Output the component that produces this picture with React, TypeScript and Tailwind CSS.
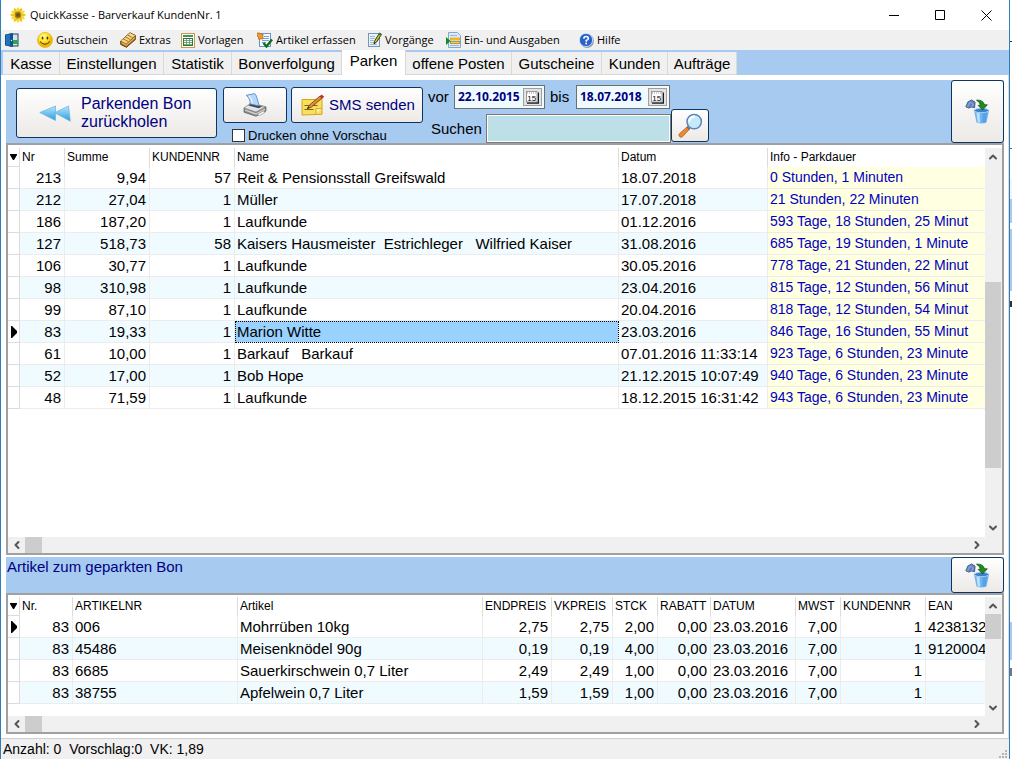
import React from 'react';
import { ChevronDown, ChevronLeft, ChevronRight, ChevronUp } from 'lucide-react';

interface Column {
  label: string;
  width: string;
  right?: boolean;
  info?: boolean;
}

const bonColumns: Column[] = [
  { label: 'Nr', width: 'w-[45px]', right: true },
  { label: 'Summe', width: 'w-[85px]', right: true },
  { label: 'KUNDENNR', width: 'w-[85px]', right: true },
  { label: 'Name', width: 'w-[384px]' },
  { label: 'Datum', width: 'w-[149px]' },
  { label: 'Info - Parkdauer', width: 'w-auto', info: true },
];

const bons = [
  ['213', '9,94', '57', 'Reit & Pensionsstall Greifswald', '18.07.2018', '0 Stunden, 1 Minuten'],
  ['212', '27,04', '1', 'Müller', '17.07.2018', '21 Stunden, 22 Minuten'],
  ['186', '187,20', '1', 'Laufkunde', '01.12.2016', '593 Tage, 18 Stunden, 25 Minut'],
  ['127', '518,73', '58', 'Kaisers Hausmeister  Estrichleger   Wilfried Kaiser', '31.08.2016', '685 Tage, 19 Stunden, 1 Minute'],
  ['106', '30,77', '1', 'Laufkunde', '30.05.2016', '778 Tage, 21 Stunden, 22 Minut'],
  ['98', '310,98', '1', 'Laufkunde', '23.04.2016', '815 Tage, 12 Stunden, 56 Minut'],
  ['99', '87,10', '1', 'Laufkunde', '20.04.2016', '818 Tage, 12 Stunden, 54 Minut'],
  ['83', '19,33', '1', 'Marion Witte', '23.03.2016', '846 Tage, 16 Stunden, 55 Minut'],
  ['61', '10,00', '1', 'Barkauf   Barkauf', '07.01.2016 11:33:14', '923 Tage, 6 Stunden, 23 Minute'],
  ['52', '17,00', '1', 'Bob Hope', '21.12.2015 10:07:49', '940 Tage, 6 Stunden, 23 Minute'],
  ['48', '71,59', '1', 'Laufkunde', '18.12.2015 16:31:42', '943 Tage, 6 Stunden, 23 Minute'],
];

const artikelColumns: Column[] = [
  { label: 'Nr.', width: 'w-[53px]', right: true },
  { label: 'ARTIKELNR', width: 'w-[165px]' },
  { label: 'Artikel', width: 'w-[245px]' },
  { label: 'ENDPREIS', width: 'w-[69px]', right: true },
  { label: 'VKPREIS', width: 'w-[61px]', right: true },
  { label: 'STCK', width: 'w-[45px]', right: true },
  { label: 'RABATT', width: 'w-[53px]', right: true },
  { label: 'DATUM', width: 'w-[85px]' },
  { label: 'MWST', width: 'w-[45px]', right: true },
  { label: 'KUNDENNR', width: 'w-[85px]', right: true },
  { label: 'EAN', width: 'w-auto' },
];

const artikel = [
  ['83', '006', 'Mohrrüben 10kg', '2,75', '2,75', '2,00', '0,00', '23.03.2016', '7,00', '1', '42381323'],
  ['83', '45486', 'Meisenknödel 90g', '0,19', '0,19', '4,00', '0,00', '23.03.2016', '7,00', '1', '91200046'],
  ['83', '6685', 'Sauerkirschwein 0,7 Liter', '2,49', '2,49', '1,00', '0,00', '23.03.2016', '7,00', '1', ''],
  ['83', '38755', 'Apfelwein 0,7 Liter', '1,59', '1,59', '1,00', '0,00', '23.03.2016', '7,00', '1', ''],
];

const SunflowerIcon = () => (
  <svg width="16" height="16" viewBox="0 0 16 16">
    {[0, 30, 60, 90, 120, 150].map((a) => (
      <ellipse key={a} cx="8" cy="8" rx="7.8" ry="2.1" fill={a % 60 ? '#f7dc3a' : '#ecc81c'} transform={`rotate(${a} 8 8)`} />
    ))}
    <circle cx="8" cy="8" r="3.4" fill="#a8821a" />
    <circle cx="8" cy="8" r="2" fill="#6b561c" />
  </svg>
);

const DoorIcon = () => (
  <svg width="14" height="14" viewBox="0 0 14 14">
    <rect x="5" y="1" width="8" height="12" fill="#cfe4f5" stroke="#2f3f58" />
    <rect x="7" y="7" width="6" height="4" fill="#2fa84c" />
    <path d="M0 1.5 8 0v14l-8-1.5z" fill="#12528f" />
    <path d="M1 2.3 5 1.6v10.8l-4-.7z" fill="#1f74bd" />
    <circle cx="6.5" cy="7.5" r=".7" fill="#fff" />
  </svg>
);

const SmileyIcon = () => (
  <svg width="16" height="16" viewBox="0 0 16 16">
    <defs>
      <radialGradient id="smiley" cx="40%" cy="30%">
        <stop offset="0" stopColor="#fffbb0" />
        <stop offset=".6" stopColor="#ffe620" />
        <stop offset="1" stopColor="#efb808" />
      </radialGradient>
    </defs>
    <circle cx="8" cy="8" r="7.5" fill="url(#smiley)" stroke="#e0ac10" strokeWidth=".7" />
    <ellipse cx="5.6" cy="6" rx=".9" ry="1.6" fill="#4a3500" />
    <ellipse cx="10.4" cy="6" rx=".9" ry="1.6" fill="#4a3500" />
    <path d="M3 9.5q5 5.5 10 0" fill="none" stroke="#4a3500" strokeWidth="1" />
  </svg>
);

const CardsIcon = () => (
  <svg width="16" height="16" viewBox="0 0 16 16">
    <path d="M.7 9 10 .8l5.3 2.6v4.2L6.4 15.3.7 12.4z" fill="#a76b20" stroke="#6b3e0b" />
    <path d="M1 8.7 10 1l5 2.6-8.7 8z" fill="#f7d98a" />
    <path d="m3.2 6.8 5.1 2.8M5.4 4.9l5.1 2.8M7.6 3l5.1 2.8" stroke="#8a541a" strokeWidth=".8" />
    <path d="m1.5 10.7 4.8 2.5L15 5.6" fill="none" stroke="#f4cf7a" />
  </svg>
);

const TemplateIcon = () => (
  <svg width="14" height="15" viewBox="0 0 14 15">
    <rect x=".5" y=".5" width="13" height="14" fill="#fdfcee" stroke="#c39a56" />
    <path d="M2 3h10" stroke="#1f7436" strokeWidth="1.6" />
    <rect x="2.5" y="5.5" width="9" height="7" fill="#fff" stroke="#2a7a3d" />
    <path d="M3 7.5h8M3 9.5h8M3 11.5h8M5.5 6v6M8.5 6v6" stroke="#559365" strokeWidth=".8" />
  </svg>
);

const CaptureIcon = () => (
  <svg width="16" height="16" viewBox="0 0 16 16">
    <rect x="2.5" y="1.5" width="11" height="13" fill="#f7fbff" stroke="#6a94bd" />
    <path d="M7 4.5h5M5 6.5h7M5 8.5h7M5 10.5h4" stroke="#75a5d5" />
    <path d="M0 1h3l2 2 1-1v5H1l1-1-2-2z" fill="#ef962e" stroke="#a85a11" strokeWidth=".6" />
    <path d="m6.5 11 3 3.5 5.5-7" fill="none" stroke="#0d6b22" strokeWidth="2.4" />
  </svg>
);

const NotePencilIcon = () => (
  <svg width="14" height="16" viewBox="0 0 14 16">
    <rect x=".5" y="1.5" width="11" height="13" fill="#eaf3fc" stroke="#7796b5" />
    <path d="M2 4.5h5M2 6.5h5M2 8.5h4M2 10.5h4M2 12.5h7" stroke="#9ab8d4" />
    <path d="m6 12 .8-3.2L11.5 1l2 1.3-4.8 7.6z" fill="#d2cb26" stroke="#1d2412" strokeWidth=".9" />
    <path d="m11 1.8 2 1.4" stroke="#2d8b3c" strokeWidth="2" />
  </svg>
);

const InOutIcon = () => (
  <svg width="15" height="16" viewBox="0 0 15 16">
    <path d="M2.5.5h9l3 3v12h-12z" fill="#dbeafa" stroke="#87a7c8" />
    <path d="M4 3.5h7M4 13.5h9" stroke="#9ab9d8" />
    <rect x="4.5" y="6" width="9.5" height="2" fill="#ffc928" stroke="#c48b14" strokeWidth=".5" />
    <rect x="4.5" y="9.5" width="9.5" height="2" fill="#ffc928" stroke="#6f6524" strokeWidth=".5" />
    <path d="M0 5v8l4.5-4z" fill="#16892c" />
  </svg>
);

const HelpIcon = () => (
  <svg width="15" height="15" viewBox="0 0 15 15">
    <circle cx="8" cy="8" r="7" fill="#8fa0b8" />
    <circle cx="7" cy="7" r="6.6" fill="#2a62cc" stroke="#dbe6f8" strokeWidth=".8" />
    <path d="M4.8 5.6Q5 3.5 7.1 3.5T9.4 5.5Q9.4 6.7 7.2 7.5v1.3" fill="none" stroke="#fff" strokeWidth="1.6" />
    <circle cx="7.2" cy="10.6" r="1" fill="#fff" />
  </svg>
);

const RewindIcon = () => (
  <svg width="32" height="17" viewBox="0 0 32 17">
    <defs>
      <linearGradient id="rewind" x1="0" y1="0" x2="0" y2="1">
        <stop offset="0" stopColor="#b9e6fb" />
        <stop offset="1" stopColor="#2d9be0" />
      </linearGradient>
    </defs>
    <path d="M16.5 1v14.5L.8 7.5z" fill="url(#rewind)" stroke="#6cb9e4" strokeWidth=".8" />
    <path d="M29.5 1l1.8 15.2L15.5 7.8z" fill="url(#rewind)" stroke="#6cb9e4" strokeWidth=".8" />
  </svg>
);

const PrinterIcon = () => (
  <svg width="24" height="24" viewBox="0 0 24 24">
    <path d="m1 15 10-4 12 3v4l-10 5.2L1 19.2z" fill="#8c8d91" stroke="#55565a" strokeWidth=".7" />
    <path d="m1 15 6-4.5 15.8 3.2L13 19z" fill="#e2e3e6" stroke="#77787c" strokeWidth=".6" />
    <path d="m5.2 12.4 10.6 2.9 3.4-1.8L8 10.6z" fill="#44454a" />
    <path d="M3.2 2.3 11.6.6q1.6 1 2.3 4.2l2.3 8.2-9-2Q7.3 5.2 3.2 2.3z" fill="#b4d7fb" stroke="#4e80bd" strokeWidth=".8" />
    <path d="M5.8 2.7q3.2 3 3.4 7.6" fill="none" stroke="#e4f2ff" strokeWidth="1.2" />
    <path d="m2 17 11 4 9-4.6" fill="none" stroke="#d4d5d8" strokeWidth="1.2" />
    <path d="m14.2 21.2 6-3.2 2 1.3-5.5 3.2z" fill="#f5f6f8" stroke="#777" strokeWidth=".5" />
    <circle cx="19.6" cy="14.9" r=".8" fill="#d8bb36" />
  </svg>
);

const StickyNoteIcon = () => (
  <svg width="24" height="22" viewBox="0 0 24 22">
    <path d="M1 5.5h20v14.8L1 21z" fill="#f9df55" stroke="#cfa52a" />
    <path d="M21 14.5h-6V20" fill="#fff1a0" stroke="#c49d29" strokeWidth=".8" />
    <path d="M3.5 11.5h13M3.5 15.5h9" stroke="#6f6332" strokeWidth="1.2" />
    <path d="M6.5 14.5 8 11.5 19 2l2.2 2L10.3 13.2z" fill="#e58b32" stroke="#673a16" strokeWidth=".8" />
    <path d="m18.5 2.5 2-2 2.7 2.2-2 2z" fill="#bf3428" />
    <path d="m6 15 2.5-1-1.3-1.3z" fill="#222" />
  </svg>
);

const MagnifierIcon = () => (
  <svg width="25" height="25" viewBox="0 0 25 25">
    <path d="m9.5 13.5 2.4 2.2-7.5 8.1q-1.6 1-2.8-.2t-.4-2.6z" fill="#ed8a2c" stroke="#9c531c" strokeWidth=".7" />
    <path d="m9 14 2.6 2.4" stroke="#6a7180" strokeWidth="1.5" />
    <circle cx="16.2" cy="8.6" r="7.2" fill="#c5ebfb" stroke="#5a86b8" strokeWidth="1.5" />
    <path d="M11 8.6Q12 3.6 17 3.6" fill="none" stroke="#fff" strokeWidth="2" />
  </svg>
);

const TrashIcon = () => (
  <svg width="25" height="25" viewBox="0 0 25 25">
    <path d="M.8 7.8 2.8 3 6.5.9l3.6 2.2-.5 5.6-3.1-.6-2.7 1z" fill="#6482bd" stroke="#34517f" strokeWidth=".8" />
    <path d="m2.8 5.5 3-2.2 2.2 2-1 2.4M2 7.7l2.2-2" fill="none" stroke="#a5bbe0" strokeWidth=".8" />
    <path d="M9 11.5h15l-2.5 12q-5 2-10 0z" fill="#70b4f0" />
    <path d="M17.5 13h5l-2 10.5h-3z" fill="#5aa0e8" />
    <path d="M11.5 13.5h3l.6 10h-2.3z" fill="#bfe1fb" />
    <ellipse cx="16.5" cy="11.5" rx="7.4" ry="2.2" fill="#3c7fd2" stroke="#a9d5f8" />
    <path d="M11.5 1.2q6.5-.6 8 4.6h2.8l-4.7 5.2-4.4-4.6 2.3-.4Q15 3 11.5 1.2z" fill="#208a24" stroke="#0e5714" strokeWidth=".8" />
  </svg>
);

const CalendarIcon = () => (
  <svg width="13" height="13" viewBox="0 0 13 13">
    <path d="M1 12h11.5V1.5" fill="none" stroke="#1a1a1a" strokeWidth="1.4" />
    <rect x=".5" y=".5" width="10.5" height="10.5" fill="#fff" stroke="#888" strokeWidth=".8" />
    <path d="M1 2h10" stroke="#999" strokeDasharray="1 1" />
    <text x="5.8" y="9.6" textAnchor="middle" fontSize="8" fontFamily="Liberation Sans, sans-serif">15</text>
  </svg>
);

const menuItems = [
  { label: 'Gutschein', icon: <SmileyIcon />, width: 'w-[83px]' },
  { label: 'Extras', icon: <CardsIcon />, width: 'w-[61px]' },
  { label: 'Vorlagen', icon: <TemplateIcon />, width: 'w-[76px]' },
  { label: 'Artikel erfassen', icon: <CaptureIcon />, width: 'w-[111px]' },
  { label: 'Vorgänge', icon: <NotePencilIcon />, width: 'w-[78px]' },
  { label: 'Ein- und Ausgaben', icon: <InOutIcon />, width: 'w-[133px]' },
  { label: 'Hilfe', icon: <HelpIcon />, width: 'w-[50px]' },
];

const tabs = [
  { label: 'Kasse', width: 'w-[57px]' },
  { label: 'Einstellungen', width: 'w-[104px]' },
  { label: 'Statistik', width: 'w-[68px]' },
  { label: 'Bonverfolgung', width: 'w-[110px]' },
  { label: 'Parken', width: 'w-[64px]' },
  { label: 'offene Posten', width: 'w-[106px]' },
  { label: 'Gutscheine', width: 'w-[90px]' },
  { label: 'Kunden', width: 'w-[66px]' },
  { label: 'Aufträge', width: 'w-[69px]' },
];

interface ToolButtonProps {
  className: string;
  label?: string;
  children: React.ReactNode;
}

const ToolButton: React.FC<ToolButtonProps> = ({ className, label, children }) => (
  <button aria-label={label} className={`flex shrink-0 items-center rounded-[3px] border border-[#0b3563] bg-linear-to-b from-white to-[#ece9e6] whitespace-nowrap text-[#000080] ${className}`}>
    {children}
  </button>
);

const DateField: React.FC<{ id: string; value: string; width: string }> = ({ id, value, width }) => (
  <div className={`flex h-[24px] items-center border border-[#6f6f6f] bg-[#f0fbff] pr-[2px] pl-[3px] ${width}`}>
    <input id={id} type="text" defaultValue={value} className="w-0 flex-1 bg-transparent font-['Open_Sans',sans-serif] text-[12px] font-bold text-[#000080] outline-none" />
    <button aria-label="Kalender" className="flex h-[18px] w-[19px] items-center justify-center border border-[#a0a0a0] bg-[#e3e3e3]">
      <CalendarIcon />
    </button>
  </div>
);

const VerticalScroll: React.FC<{ before: string; thumb: string; after: string }> = ({ before, thumb, after }) => (
  <div className="flex w-[17px] shrink-0 flex-col bg-[#f0f0f0] pr-[1px] text-[#555]">
    <button aria-label="Nach oben" className="flex h-[17px] items-center justify-center"><ChevronUp size={12} strokeWidth={4} /></button>
    <div className={`basis-0 ${before}`} />
    <div className={`basis-0 bg-[#cdcdcd] ${thumb}`} />
    <div className={`basis-0 ${after}`} />
    <button aria-label="Nach unten" className="flex h-[17px] items-center justify-center"><ChevronDown size={12} strokeWidth={4} /></button>
  </div>
);

const HorizontalScroll = () => (
  <div className="flex h-[16px] items-stretch bg-[#f0f0f0] pr-[17px] text-[#555]">
    <button aria-label="Nach links" className="flex w-[17px] items-center justify-center"><ChevronLeft size={12} strokeWidth={4} /></button>
    <div className="w-[17px] bg-[#cdcdcd]" />
    <div className="flex-1" />
    <button aria-label="Nach rechts" className="flex w-[17px] items-center justify-center"><ChevronRight size={12} strokeWidth={4} /></button>
  </div>
);

interface GridProps {
  columns: Column[];
  rows: string[][];
  current: number;
  selectedColumn?: number;
}

const DataGrid: React.FC<GridProps> = ({ columns, rows, current, selectedColumn }) => (
  <div className="min-w-0 flex-1 overflow-hidden">
    <table className="w-full table-fixed border-separate border-spacing-0 text-[15px] leading-[21px]">
      <thead>
        <tr className="h-[19px] text-left text-[12px] leading-[16px]">
          <th className="w-[12px] border-r border-b border-[#dcdcdc] p-0">
            <svg width="9" height="7" viewBox="0 0 9 7" className="ml-[1px]"><path d="M1 0h7v1L5 6H4L1 1z" /></svg>
          </th>
          {columns.map((col, i) => (
            <th key={col.label} className={`p-0 pb-[2px] pl-[2px] font-normal whitespace-nowrap ${col.width} ${i < columns.length - 1 ? 'border-r border-[#dcdcdc]' : ''}`}>
              {col.label}
            </th>
          ))}
        </tr>
      </thead>
      <tbody>
        {rows.map((row, r) => (
          <tr key={r} className={`h-[22px] ${r % 2 ? 'bg-[#f0fbff]' : 'bg-white'}`}>
            <td className="border-r border-b border-[#dcdcdc] bg-white p-0">
              {r === current && (
                <svg width="8" height="12" viewBox="0 0 8 12" className="ml-[2px]"><path d="M1 0h1l5 5v2l-5 5H1z" /></svg>
              )}
            </td>
            {row.map((cell, c) => (
              <td
                key={c}
                className={`overflow-hidden border-b border-[#ececec] p-0 whitespace-pre ${c < row.length - 1 ? 'border-r' : ''} ${columns[c].right ? 'pr-[3px] text-right' : 'pl-[2px]'} ${columns[c].info ? 'bg-[#ffffe1] text-[14px] text-[#0000c0]' : ''} ${r === current && c === selectedColumn ? 'bg-[#99d1ff] outline-1 -outline-offset-1 outline-dotted outline-black' : ''}`}
              >
                {cell}
              </td>
            ))}
          </tr>
        ))}
      </tbody>
    </table>
  </div>
);

export default function App() {
  return (
    <div className="flex min-h-screen bg-white font-['Liberation_Sans',Arial,sans-serif] text-black">
      <div className="flex min-w-0 flex-1 flex-col border-r border-l border-[#2f7dba]">
        <header className="flex h-[30px] items-center pl-[9px] font-['Open_Sans',sans-serif] text-[11px]">
          <SunflowerIcon />
          <h1 className="ml-[4px] flex-1">QuickKasse - Barverkauf KundenNr. 1</h1>
          <button aria-label="Minimieren" className="flex h-full w-[46px] items-center justify-center">
            <svg width="10" height="10" viewBox="0 0 10 10"><path d="M0 5.5h10" stroke="#000" /></svg>
          </button>
          <button aria-label="Maximieren" className="flex h-full w-[46px] items-center justify-center">
            <svg width="10" height="10" viewBox="0 0 10 10"><path d="M.5.5h9v9h-9z" fill="none" stroke="#000" /></svg>
          </button>
          <button aria-label="Schließen" className="flex h-full w-[46px] items-center justify-center">
            <svg width="11" height="11" viewBox="0 0 11 11"><path d="m.5.5 10 10m0-10-10 10" stroke="#000" /></svg>
          </button>
        </header>

        <nav className="flex h-[20px] items-center bg-[#f0f0f0] pl-[4px] font-['Open_Sans',sans-serif] text-[11px]">
          <button aria-label="Beenden" className="w-[32px]"><DoorIcon /></button>
          {menuItems.map((item) => (
            <button key={item.label} className={`flex items-center gap-[3px] whitespace-nowrap ${item.width}`}>
              <span className="shrink-0">{item.icon}</span>
              {item.label}
            </button>
          ))}
        </nav>

        <div role="tablist" className="flex h-[25px] items-end bg-[#a6caf0] pl-[2px] text-[15px]">
          {tabs.map((tab) => (
            <button
              key={tab.label}
              role="tab"
              aria-selected={tab.label === 'Parken'}
              className={`border-r border-[#d9d9d9] text-center whitespace-nowrap ${tab.width} ${tab.label === 'Parken' ? 'h-[25px] bg-white pb-[2px]' : 'h-[23px] border-b bg-[#f0f0f0] pt-[1px]'}`}
            >
              {tab.label}
            </button>
          ))}
        </div>

        <main className="flex flex-1 flex-col border-r border-[#dcdcdc] pt-[5px] pr-[4px] pl-[5px]">
          <section className="flex h-[63px] bg-[#a6caf0] pl-[10px]">
            <ToolButton className="mt-[8px] h-[50px] w-[201px] gap-[10px] pl-[22px] text-left leading-[18px]">
              <RewindIcon />
              <span>Parkenden Bon<br />zurückholen</span>
            </ToolButton>

            <div className="ml-[6px] shrink-0 pt-[7px]">
              <div className="flex gap-[4px]">
                <ToolButton label="Drucken" className="h-[36px] w-[64px] justify-center"><PrinterIcon /></ToolButton>
                <ToolButton className="h-[36px] w-[132px] gap-[4px] pl-[9px] text-[15px]"><StickyNoteIcon />SMS senden</ToolButton>
              </div>
              <label className="mt-[5px] ml-[9px] flex items-center gap-[3px] text-[13px] leading-[15px]">
                <input type="checkbox" className="size-[13px] appearance-none border border-[#333] bg-white" />
                Drucken ohne Vorschau
              </label>
            </div>

            <div className="ml-[5px] shrink-0 pt-[5px] text-[15px]">
              <div className="flex items-center">
                <label htmlFor="von" className="w-[26px]">vor</label>
                <DateField id="von" value="22.10.2015" width="w-[91px]" />
                <label htmlFor="bis" className="w-[31px] pl-[5px]">bis</label>
                <DateField id="bis" value="18.07.2018" width="w-[94px]" />
              </div>
              <div className="flex">
                <label htmlFor="suchen" className="w-[58px] pt-[9px] pl-[3px]">Suchen</label>
                <input id="suchen" type="text" className="mt-[5px] h-[29px] w-[185px] border border-[#7a7a7a] bg-[#bcdfe8] px-1 outline-1 -outline-offset-2 outline-white" />
                <ToolButton label="Suchen" className="h-[33px] w-[38px] justify-center"><MagnifierIcon /></ToolButton>
              </div>
            </div>

            <ToolButton label="Löschen" className="ml-auto w-[53px] justify-center"><TrashIcon /></ToolButton>
          </section>

          <section className="flex flex-1 flex-col border-2 border-[#a0a0a0] pt-[3px]">
            <div className="flex flex-1">
              <DataGrid columns={bonColumns} rows={bons} current={7} selectedColumn={3} />
              <VerticalScroll before="grow-[117]" thumb="grow-[185]" after="grow-[52]" />
            </div>
            <HorizontalScroll />
          </section>

          <section className="mt-[2px] flex h-[36px] bg-[#a6caf0]">
            <h2 className="pl-[1px] text-[15px] leading-[19px] text-[#000080]">Artikel zum geparkten Bon</h2>
            <ToolButton label="Artikel löschen" className="ml-auto w-[53px] justify-center"><TrashIcon /></ToolButton>
          </section>

          <section className="border-2 border-[#a0a0a0] pt-[2px]">
            <div className="flex">
              <div className="flex min-w-0 flex-1 pb-[12px]">
                <DataGrid columns={artikelColumns} rows={artikel} current={0} />
              </div>
              <VerticalScroll before="grow-0" thumb="grow-[25]" after="grow-[61]" />
            </div>
            <HorizontalScroll />
          </section>
          <div className="h-[4px]" />
        </main>

        <footer className="flex h-[21px] items-center border-t border-[#d0d0d0] bg-[#f0f0f0] pl-[2px] text-[14px]">
          <span className="flex-1 whitespace-pre">Anzahl: 0  Vorschlag:0  VK: 1,89</span>
          <svg width="9" height="9" viewBox="0 0 9 9" className="mr-[1px] self-end" fill="#b5b5b5">
            <path d="M6 0h2v2H6zM3 3h2v2H3zM6 3h2v2H6zM0 6h2v2H0zM3 6h2v2H3zM6 6h2v2H6z" />
          </svg>
        </footer>
      </div>

      {/* edge of the window lying behind */}
      <div className="flex w-[2px] flex-col bg-white">
        <div className="mt-[41px] h-px bg-[#333]" />
        <div className="mt-[106px] h-px bg-[#2f7dba]" />
        <div className="mt-[30px] h-[20px] bg-[#eef6fc]" />
        <div className="h-[24px] bg-[#a6caf0]" />
        <div className="mt-[6px] h-[62px] bg-[#a6caf0]" />
        <div className="mt-[10px] h-[6px] bg-[#333]" />
        <div className="mt-[315px] h-[38px] bg-[#a6caf0]" />
        <div className="mt-[8px] h-[8px] bg-[#777]" />
      </div>
    </div>
  );
}
